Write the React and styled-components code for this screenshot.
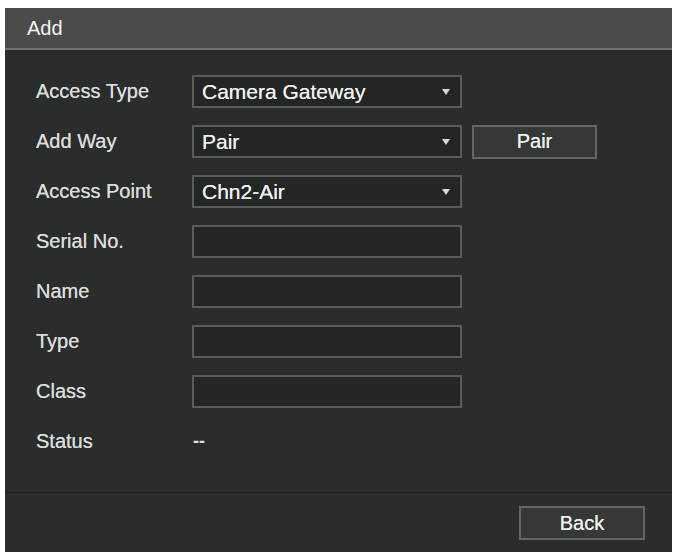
import React from "react";
import styled, { createGlobalStyle } from "styled-components";

const GlobalStyle = createGlobalStyle`
  html, body {
    margin: 0;
    padding: 0;
    background: #ffffff;
  }
  body {
    font-family: "Liberation Sans", Arial, sans-serif;
  }
`;

const rows = [
  { label: "Access Type", kind: "select", value: "Camera Gateway" },
  { label: "Add Way", kind: "select", value: "Pair", button: "Pair" },
  { label: "Access Point", kind: "select", value: "Chn2-Air" },
  { label: "Serial No.", kind: "input" },
  { label: "Name", kind: "input" },
  { label: "Type", kind: "input" },
  { label: "Class", kind: "input" },
  { label: "Status", kind: "text", value: "--" },
];

function App() {
  return (
    <>
      <GlobalStyle />
      <Panel>
        <TitleBar>Add</TitleBar>
        <Body>
          <Form>
            {rows.map((row) => (
              <React.Fragment key={row.label}>
                <Label>{row.label}</Label>
                {row.kind === "select" && (
                  <Field>
                    <FieldText>{row.value}</FieldText>
                    <Arrow />
                  </Field>
                )}
                {row.kind === "input" && <Field />}
                {row.kind === "text" && <StatusText>{row.value}</StatusText>}
                {row.button ? <Button $width={125}>{row.button}</Button> : <span />}
              </React.Fragment>
            ))}
          </Form>
        </Body>
        <Footer>
          <Button $width={126}>Back</Button>
        </Footer>
      </Panel>
    </>
  );
}

export default App;

const Panel = styled.div`
  margin: 8px 0 0 5px;
  width: 667px;
  height: 544px;
  display: flex;
  flex-direction: column;
  background: #2b2d2d;
  color: #e6e6e6;
  font-size: 20px;
`;

const TitleBar = styled.div`
  height: 40px;
  display: flex;
  align-items: center;
  padding-left: 22px;
  background: #4b4b4b;
  border-bottom: 2px solid #707070;
  color: #f2f2f2;
`;

const Body = styled.div`
  flex: 1;
  padding: 25px 0 0 31px;
`;

const Form = styled.div`
  display: grid;
  grid-template-columns: 156px 270px auto;
  grid-auto-rows: 33px;
  row-gap: 17px;
  align-items: center;
`;

const Label = styled.div`
  color: #dcdcdc;
  white-space: nowrap;
  text-shadow: 0 0 0.5px #dcdcdc;
`;

const Field = styled.div`
  box-sizing: border-box;
  height: 33px;
  display: flex;
  align-items: center;
  justify-content: space-between;
  padding: 0 10px 0 8px;
  background: #242626;
  border: 2px solid #5a5c5c;
`;

const FieldText = styled.span`
  font-size: 21px;
  color: #f0f0f0;
  text-shadow: 0 0 0.5px #f0f0f0;
`;

const Arrow = styled.span`
  width: 0;
  height: 0;
  border-left: 4px solid transparent;
  border-right: 4px solid transparent;
  border-top: 6px solid #d8d8d8;
`;

const StatusText = styled.div`
  padding-left: 1px;
  font-size: 18px;
  font-weight: bold;
  color: #e0e0e0;
`;

const Button = styled.div`
  box-sizing: border-box;
  width: ${(p) => p.$width}px;
  height: 34px;
  margin-left: 10px;
  display: flex;
  align-items: center;
  justify-content: center;
  background: #363838;
  border: 2px solid #646666;
  color: #f0f0f0;
  text-shadow: 0 0 0.5px #f0f0f0;
`;

const Footer = styled.div`
  height: 60px;
  box-sizing: border-box;
  display: flex;
  justify-content: flex-end;
  align-items: flex-start;
  padding: 13px 27px 0 0;
  border-top: 1px solid #1d1f1f;
`;
